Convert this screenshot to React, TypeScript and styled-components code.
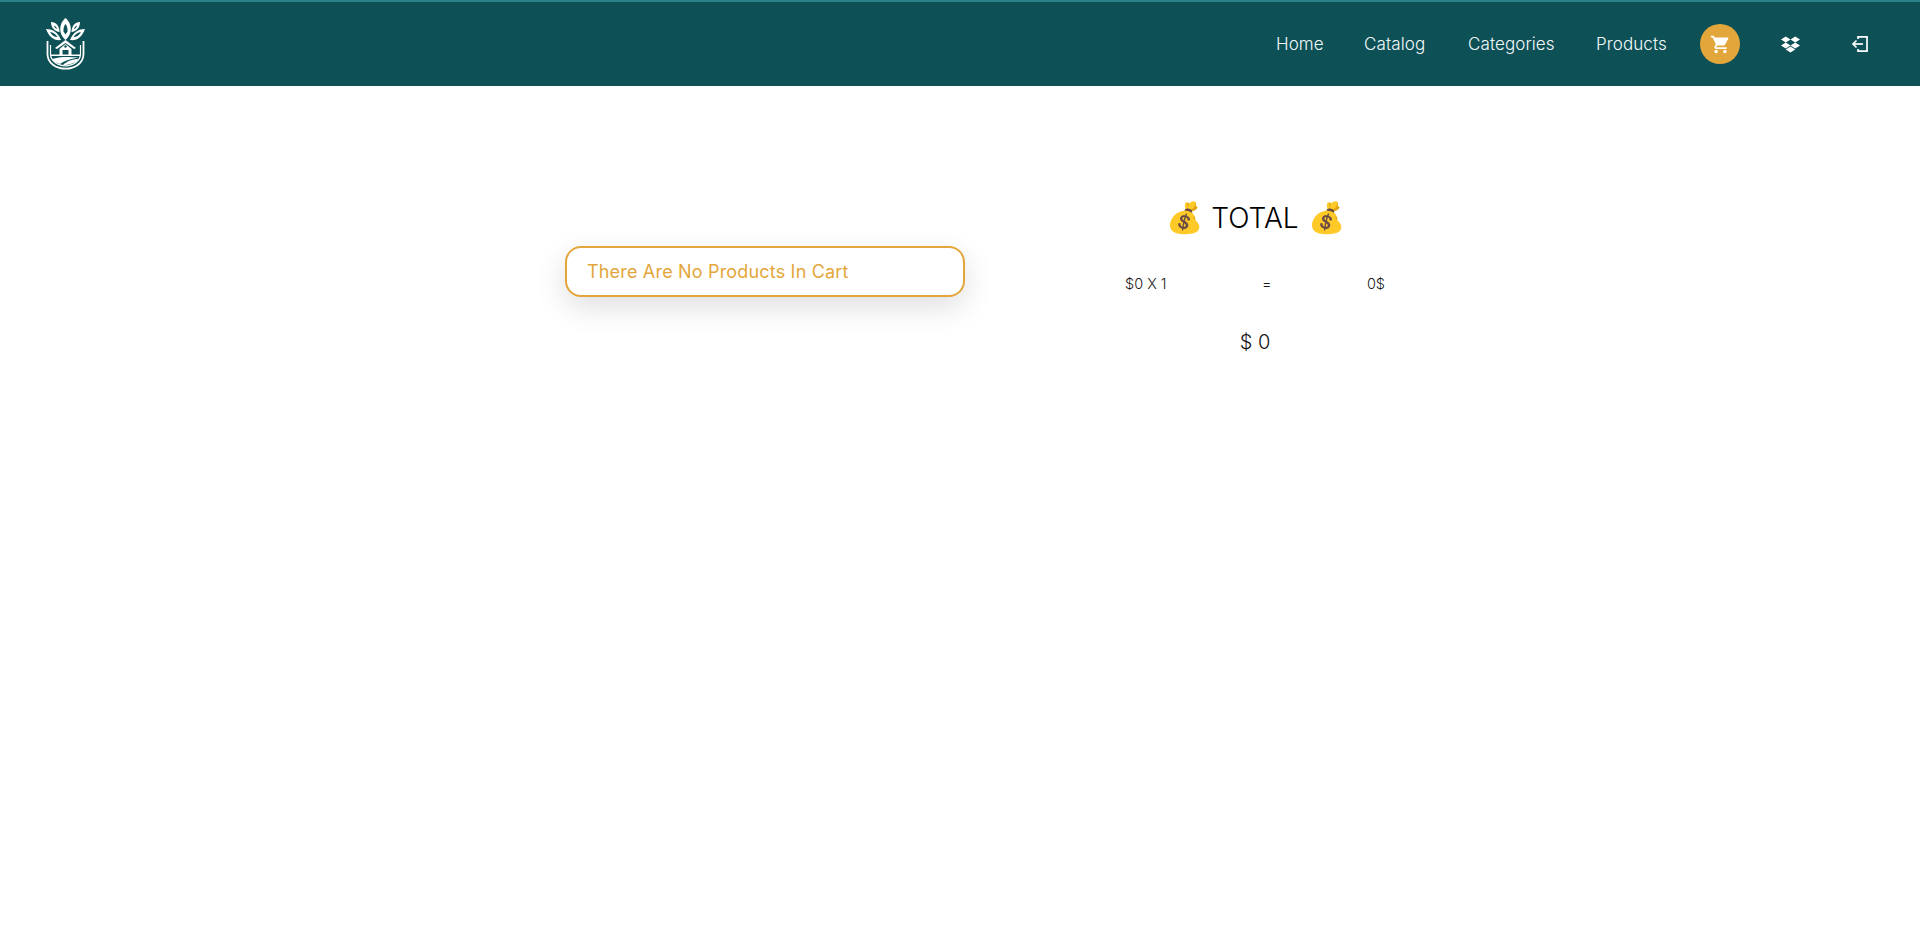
import React from "react";
import styled, { createGlobalStyle } from "styled-components";
import { MdShoppingCart } from "react-icons/md";
import { FaDropbox } from "react-icons/fa";

const Global = createGlobalStyle`
  html, body { margin: 0; padding: 0; background: #fff; }
  body { font-family: Inter, "Open Sans", sans-serif; font-weight: 300; min-height: 950px; }
`;

const Header = styled.header`
  height: 86px;
  box-sizing: border-box;
  background: #0d5056;
  border-top: 2px solid #2b8288;
  display: flex;
  align-items: center;
  justify-content: space-between;
  padding: 0 50px 0 46px;
`;

const Logo = styled.svg`
  width: 40px;
  height: 52px;
  display: block;
`;

const Nav = styled.nav`
  display: flex;
  align-items: center;
`;

const NavLink = styled.a<{ $w: number }>`
  color: #f4fafb;
  font-size: 17px;
  letter-spacing: 0.1px;
  font-weight: 300;
  width: ${(p) => p.$w}px;
  margin-right: 40px;
  white-space: nowrap;
  &:nth-child(4) { margin-right: 35px; }
`;

const CartCircle = styled.span`
  width: 40px;
  height: 40px;
  border-radius: 50%;
  background: #e3a63b;
  color: #fff;
  display: flex;
  align-items: center;
  justify-content: center;
  margin-right: 40px;
  font-size: 21px;
`;

const IconSlot = styled.span<{ $mr: number }>`
  width: 20px;
  height: 20px;
  color: #fff;
  display: flex;
  align-items: center;
  justify-content: center;
  margin-right: ${(p) => p.$mr}px;
  font-size: 19px;
`;

const Main = styled.main`
  display: flex;
  align-items: flex-start;
  padding: 108px 0 0 565px;
`;

const EmptyCard = styled.div`
  width: 400px;
  height: 51px;
  box-sizing: border-box;
  margin-top: 52px;
  margin-right: 120px;
  border: 2px solid #e3a63b;
  border-radius: 16px;
  background: #fff;
  box-shadow: 0 10px 30px rgba(0, 0, 0, 0.13);
  color: #e3a63b;
  font-size: 18px;
  letter-spacing: 0.18px;
  font-weight: 400;
  display: flex;
  align-items: center;
  padding-left: 20px;
  white-space: nowrap;
`;

const Summary = styled.section`
  width: 340px;
  display: flex;
  flex-direction: column;
  align-items: center;
`;

const Title = styled.h2`
  margin: 0;
  height: 48px;
  display: flex;
  align-items: center;
  gap: 10px;
  font-size: 28px;
  font-weight: 300;
  color: #000;
`;

const Bag = styled.span`
  font-family: "Noto Color Emoji", sans-serif;
  font-size: 30px;
  line-height: 36px;
  &:first-child {
    margin-left: 2px;
    margin-right: -2px;
  }
`;

const Row = styled.div`
  width: 260px;
  margin-top: 31px;
  display: flex;
  justify-content: space-between;
  font-size: 14.5px;
  line-height: 22px;
  color: #1a1a1a;
`;

const Grand = styled.div`
  margin-top: 32px;
  font-size: 20px;
  line-height: 30px;
  color: #111;
`;

const BrandLogo = () => (
  <Logo viewBox="0 0 40 52" aria-label="logo">
    <g fill="#fff">
      <path d="M19.500 0C24 4 25.500 9 24.500 14C23.500 18 21.500 20 19.500 22C17.500 20 15.500 18 14.500 14C13.500 9 15 4 19.500 0Z" />
      <path d="M5 4C10 4 13.500 8 13.500 14C9 13.500 5 10 5 4Z" />
      <path d="M34 4C29 4 25.500 8 25.500 14C30 13.500 34 10 34 4Z" />
      <path d="M0 11C6 11 12 14 15 22C8 23 3 19 0 11Z" />
      <path d="M39 11C33 11 27 14 24 22C31 23 36 19 39 11Z" />
    </g>
    <g fill="#0d5056">
      <path d="M19.500 6C21 8 21.800 10.500 21.500 13.500L19.500 16.500L17.500 13.500C17.200 10.500 18 8 19.500 6Z" />
      <path d="M8 7.500C9.500 8 10.800 9.500 11 11C9.500 10.500 8.300 9 8 7.500Z" />
      <path d="M31 7.500C29.500 8 28.200 9.500 28 11C29.500 10.500 30.700 9 31 7.500Z" />
      <path d="M4 14C7 14.500 9.500 16 11.500 19C8.500 19 5.500 17 4 14Z" />
      <path d="M35 14C32 14.500 29.500 16 27.500 19C30.500 19 33.500 17 35 14Z" />
    </g>
    <path d="M1.500 23V36C1.500 45 10 50.700 19.500 50.700C29 50.700 37.500 45 37.500 36V23" fill="none" stroke="#fff" strokeWidth="1.800" />
    <path d="M4.500 27V36C4.500 43 12 47.800 19.500 47.800C27 47.800 34.500 43 34.500 36V27" fill="none" stroke="#fff" strokeWidth="1.200" />
    <path d="M9 30L19.500 22L30 30L28 31L19.500 25L11 31Z" fill="#fff" />
    <path d="M13.500 31L19.500 26L25.500 31V37H22.500V32H16.500V37H13.500Z" fill="#fff" />
    <circle cx="19.500" cy="28.500" r="1.200" fill="#0d5056" />
    <path d="M5 36.500H34V38H5Z" fill="#fff" />
    <path d="M6 41C13 38.500 22 38.500 33 39.500C28 40 20 42 14 46C10 45 7.500 43 6 41Z" fill="#fff" />
    <path d="M17 47C21 43 27 41 32.500 41C30 44.500 25 47 17 47Z" fill="#fff" />
  </Logo>
);

const LoginIcon = () => (
  <svg width="20" height="20" viewBox="0 0 20 20" fill="none" stroke="#fff" strokeWidth="1.700">
    <path d="M8 5V2.800H17V17.200H8V15" />
    <path d="M13 10H3" />
    <path d="M6.500 6.500L3 10L6.500 13.500" />
  </svg>
);

export default function App() {
  return (
    <>
      <Global />
      <Header>
        <BrandLogo />
        <Nav>
          <NavLink $w={48}>Home</NavLink>
          <NavLink $w={64}>Catalog</NavLink>
          <NavLink $w={88}>Categories</NavLink>
          <NavLink $w={69}>Products</NavLink>
          <CartCircle><MdShoppingCart /></CartCircle>
          <IconSlot $mr={50}><FaDropbox /></IconSlot>
          <IconSlot $mr={0}><LoginIcon /></IconSlot>
        </Nav>
      </Header>
      <Main>
        <EmptyCard>There Are No Products In Cart</EmptyCard>
        <Summary>
          <Title><Bag>💰</Bag>TOTAL<Bag>💰</Bag></Title>
          <Row><span>$0 X 1</span><span>=</span><span>0$</span></Row>
          <Grand>$ 0</Grand>
        </Summary>
      </Main>
    </>
  );
}
